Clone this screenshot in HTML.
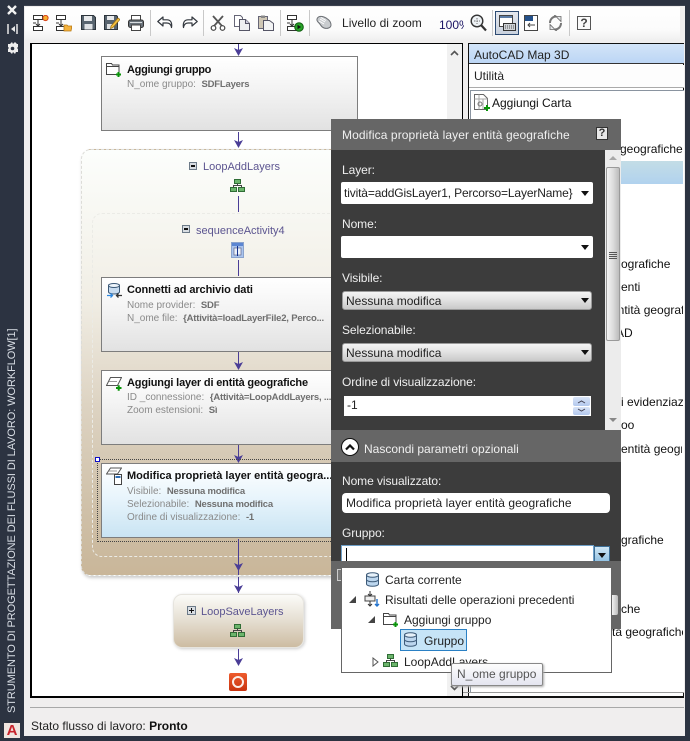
<!DOCTYPE html>
<html lang="it">
<head>
<meta charset="utf-8">
<title>Strumento di progettazione dei flussi di lavoro</title>
<style>
html,body{margin:0;padding:0}
body{width:690px;height:741px;overflow:hidden;position:relative;background:#2c3341;font-family:"Liberation Sans",sans-serif;font-size:12px;color:#111}
div,span,svg{position:absolute;box-sizing:border-box}
.t{white-space:nowrap;line-height:14px}
.card{left:101px;width:300px;height:75px;border:1px solid #7d7d7d;background:linear-gradient(#fff,#f3f3f3 45%,#e2e2e2)}
.ct{font-weight:bold;font-size:11px;color:#111;left:127px;white-space:nowrap;line-height:14px}
.cd{font-size:10px;color:#8a8a8a;left:127px;white-space:nowrap;line-height:13px}
.cd b{color:#6f6f6f;font-size:9.500px;letter-spacing:-.2px}
.ln{width:1px;background:#4a3d96;left:238px}
.lab{left:342px;color:#efefef;font-size:12px;white-space:nowrap;line-height:14px;letter-spacing:-.08px}
.box{left:341px;width:252px;height:22px;background:#fff;border-radius:2px}
.cmb{left:342px;width:250px;height:19px;border-radius:3px;background:linear-gradient(#f4f4f4,#e3e3e3 45%,#c9c9c9);border:1px solid #9a9a9a;font-size:12px;line-height:19px;padding-left:3px;color:#222}
.li{font-size:12px;color:#111;white-space:nowrap;line-height:14px}
.tree{font-size:12px;color:#222;white-space:nowrap;line-height:14px}
.sep{width:1px;height:26px;top:10px;background:#c9c9c9}
</style>
</head>
<body>
<svg width="0" height="0" style="left:0;top:0">
<defs>
<symbol id="db" viewBox="0 0 15 15"><path d="M1.500 3v9c0 1.300 2.600 2.300 6 2.300s6-1 6-2.300V3z" fill="#bcd6ee" stroke="#3d5a78"/><ellipse cx="7.500" cy="3" rx="6" ry="2.300" fill="#e6f1fa" stroke="#3d5a78"/><path d="M1.500 7.500c0 1.300 2.600 2.300 6 2.300s6-1 6-2.300" fill="none" stroke="#3d5a78"/></symbol>
<symbol id="net" viewBox="0 0 15 13"><rect x="4.500" y=".5" width="6" height="4" fill="#6cb56c" stroke="#2f6d35"/><rect x=".5" y="8.500" width="6" height="4" fill="#6cb56c" stroke="#2f6d35"/><rect x="8.500" y="8.500" width="6" height="4" fill="#6cb56c" stroke="#2f6d35"/><path d="M7.500 4.500v2M3.500 8.500v-2h8v2" fill="none" stroke="#444"/></symbol>
<symbol id="flow" viewBox="0 0 16 17"><rect x=".5" y=".5" width="9" height="4" fill="#fff" stroke="#333"/><rect x=".5" y="11.500" width="9" height="4" fill="#fff" stroke="#333"/><path d="M5 4.500v7M3 9l2 2 2-2M0 8h3" fill="none" stroke="#333"/></symbol>
<symbol id="addfolder" viewBox="0 0 15 15"><path d="M.5 12.500V1.500h5l1 1.500h6.500v9.500z" fill="#fff" stroke="#444"/><path d="M.5 4.500h12.500" stroke="#444"/><path d="M10 12.500h5M12.500 10v5" stroke="#0a930a" stroke-width="2"/></symbol>
</defs>
</svg>

<!-- sidebar -->
<svg style="left:5px;top:4px" width="15" height="52" viewBox="0 0 15 52">
<path d="M3 2l8 8M11 2l-8 8" stroke="#f2f2f2" stroke-width="2.400"/>
<path d="M3 20v10M12 20v10" stroke="#e8e8e8" stroke-width="1.500"/><path d="M6 25l4-3v6z" fill="#e8e8e8"/>
<path d="M3 40h2l2-2 1 2 2-2 2 2h1v3l-1 1 1 1v3h-2l-1 2-2-2-1 2-2-2H3v-3l1-1-1-1z" fill="#eee"/><circle cx="7.500" cy="44.500" r="1.800" fill="#2c3341"/>
</svg>
<div class="t" style="left:5px;bottom:28px;width:14px;height:384px;writing-mode:vertical-rl;transform:rotate(180deg);font-size:11px;color:#d8dde4;line-height:14px;letter-spacing:-.08px">STRUMENTO DI PROGETTAZIONE DEI FLUSSI DI LAVORO: WORKFLOW[1]</div>
<div style="left:4px;top:723px;width:16px;height:15px;background:#f0e5e0"></div>
<div class="t" style="left:4px;top:723px;width:16px;text-align:center;font-size:15px;font-weight:bold;color:#c8232c;line-height:15px">A</div>

<!-- window -->
<div style="left:24px;top:5px;width:661px;height:731px;background:#f0eeee;border-top:1px solid #3c4350"></div>

<!-- toolbar -->
<div style="left:25px;top:7px;width:655px;height:33px;background:linear-gradient(#fff,#fbfbfb 70%,#f0f0f0)"></div>
<svg style="left:33px;top:15px" width="16" height="17"><use href="#flow" width="16" height="17"/><circle cx="12.500" cy="3" r="2.600" fill="#f7b12d" stroke="#d8431b"/></svg>
<svg style="left:56px;top:15px" width="16" height="17"><use href="#flow" width="16" height="17"/><path d="M8 10h3l1 1h4l-1 5H8z" fill="#f4b23c" stroke="#b87a14" stroke-width=".8"/></svg>
<svg style="left:81px;top:15px" width="15" height="15" viewBox="0 0 15 15"><path d="M.5.500h12l2 2v12H.5z" fill="#58646f" stroke="#2c343b"/><rect x="3" y="1" width="8" height="5" fill="#e8eaec"/><rect x="3.500" y="9" width="8" height="5.500" fill="#dfe2e5"/></svg>
<svg style="left:104px;top:15px" width="16" height="15" viewBox="0 0 16 15"><path d="M.5.500h12l1 1v13H.5z" fill="#58646f" stroke="#2c343b"/><rect x="3" y="1" width="7" height="4" fill="#e8eaec"/><rect x="3" y="9" width="7" height="5" fill="#dfe2e5"/><path d="M7 11l7-8 2 1.500-7 8-2.500 1z" fill="#f3c140" stroke="#9c6d12" stroke-width=".7"/></svg>
<svg style="left:128px;top:15px" width="16" height="16" viewBox="0 0 16 16"><rect x="3.500" y=".5" width="9" height="5" fill="#fff" stroke="#444"/><rect x=".5" y="5" width="15" height="7.500" rx="2" fill="#6b747c" stroke="#333"/><rect x="3.500" y="10" width="9" height="5.500" fill="#fff" stroke="#444"/><path d="M2 7.500h12" stroke="#d9dde0"/></svg>
<div class="sep" style="left:150px"></div>
<svg style="left:157px;top:16px" width="16" height="13" viewBox="0 0 16 13"><path d="M6 1L.8 5.500 6 10V7h4c2.500 0 4 1.200 4.500 4.500C15.500 6 13 3.800 10 3.800H6z" fill="#fff" stroke="#33383f" stroke-width="1.200" stroke-linejoin="round"/></svg>
<svg style="left:182px;top:16px" width="16" height="13" viewBox="0 0 16 13"><path d="M10 1l5.200 4.500L10 10V7H6c-2.500 0-4 1.200-4.500 4.500C.5 6 3 3.800 6 3.800h4z" fill="#fff" stroke="#33383f" stroke-width="1.200" stroke-linejoin="round"/></svg>
<div class="sep" style="left:203px"></div>
<svg style="left:210px;top:15px" width="16" height="16" viewBox="0 0 16 16"><path d="M3 1l9 10M13 1L4 11" stroke="#555" stroke-width="1.800"/><circle cx="3.500" cy="13" r="2.300" fill="#fff" stroke="#444" stroke-width="1.200"/><circle cx="12.500" cy="13" r="2.300" fill="#fff" stroke="#444" stroke-width="1.200"/></svg>
<svg style="left:234px;top:15px" width="16" height="16" viewBox="0 0 16 16"><path d="M.5.500h6l2 2v9H.5z" fill="#fff" stroke="#667"/><path d="M5.500 4.500h6l4 4v7h-10z" fill="#eef0f2" stroke="#556"/><path d="M11.500 4.500v4h4" fill="#ccd" stroke="#556"/></svg>
<svg style="left:258px;top:15px" width="16" height="16" viewBox="0 0 16 16"><rect x=".5" y="1.500" width="9" height="12" fill="#cfc7b5" stroke="#667"/><rect x="3" y=".5" width="4" height="2.500" fill="#888"/><path d="M5.500 5.500h6l4 3v7h-10z" fill="#f3f4f5" stroke="#556"/></svg>
<div class="sep" style="left:280px"></div>
<svg style="left:287px;top:15px" width="17" height="17"><use href="#flow" width="16" height="17"/><circle cx="12" cy="12" r="4.300" fill="#27a327" stroke="#0d5c0d"/><path d="M10.500 9.800l3.500 2.200-3.500 2.200z" fill="#111"/></svg>
<div class="sep" style="left:309px"></div>
<svg style="left:316px;top:15px" width="16" height="15" viewBox="0 0 16 15"><path d="M1 4c1-3 4-3 7-2 3 1 7 4 7 8 0 3-4 4-7 3-3-1-3-3-5-5C2 7 .5 6 1 4z" fill="#c9cccf" stroke="#6c7075"/><path d="M4 4l5 3M5 2.500l5 3M3 6l5 3" stroke="#fff"/></svg>
<div class="t" style="left:342px;top:16px;font-size:12px;color:#222;letter-spacing:.03px">Livello di zoom</div>
<div class="t" style="left:439px;top:18px;width:25px;overflow:hidden;font-size:12px;color:#1b1464">100%</div>
<svg style="left:470px;top:14px" width="17" height="18" viewBox="0 0 17 18"><circle cx="7" cy="7" r="5.800" fill="#eef2f5" stroke="#333" stroke-width="1.400"/><path d="M4 7h6M7 4v6" stroke="#777" stroke-dasharray="1.500 1"/><path d="M11 11l5 5.500" stroke="#333" stroke-width="2.200"/></svg>
<div class="sep" style="left:492px"></div>
<div style="left:495px;top:11px;width:24px;height:24px;border:1px solid #2c4a72;background:linear-gradient(#e4e8ee,#c9d2de)"></div>
<svg style="left:499px;top:15px" width="17" height="16" viewBox="0 0 17 16"><rect x=".5" y=".5" width="13" height="11" fill="#fff" stroke="#444"/><rect x="1" y="1" width="12" height="2" fill="#5c7ca6"/><rect x="4.500" y="8.500" width="12" height="7" fill="#cfd3d7" stroke="#333"/><path d="M6 11h9M6 13h9" stroke="#555" stroke-dasharray="1 1"/></svg>
<svg style="left:524px;top:15px" width="14" height="16" viewBox="0 0 14 16"><rect x=".5" y=".5" width="13" height="15" fill="#fff" stroke="#444"/><rect x="1" y="1" width="8" height="5" fill="#23508a"/><path d="M11 10H4M6 8l-2 2 2 2" stroke="#444" fill="none"/></svg>
<svg style="left:548px;top:15px" width="15" height="16" viewBox="0 0 15 16"><path d="M2 8c0-4 3-6.500 6-6.500L6 .5M13 8c0 4-3 6.500-6 6.500l2 1" fill="none" stroke="#777" stroke-width="2"/><path d="M8 1.500h5v5zM7 14.500H2v-5z" fill="#e5e7ea" stroke="#666" stroke-width=".8"/></svg>
<div class="sep" style="left:569px"></div>
<div style="left:577px;top:16px;width:14px;height:14px;border:1px solid #555;background:#fafafa"></div>
<div class="t" style="left:577px;top:16px;width:14px;text-align:center;font-weight:bold;font-size:12px;color:#444">?</div>

<!-- canvas -->
<div style="left:30px;top:43px;width:433px;height:655px;border:1px solid #000;border-width:1px 1px 2px 2px;background:#fff;overflow:hidden"></div>
<div style="left:447px;top:44px;width:15px;height:652px;background:#f1f1f1"></div>
<svg style="left:450px;top:50px" width="9" height="6"><path d="M1 5l3.500-3.500L8 5" fill="none" stroke="#555" stroke-width="1.600"/></svg>
<svg style="left:450px;top:685px" width="9" height="6"><path d="M1 1l3.500 3.500L8 1" fill="none" stroke="#555" stroke-width="1.600"/></svg>

<!-- flow arrows -->
<div class="ln" style="top:44px;height:10px"></div><svg style="left:234px;top:47px" width="9" height="9"><path d="M0 1l4.500 2L9 1 4.500 9z" fill="#4a3d96"/></svg>
<div class="ln" style="top:132px;height:15px"></div><svg style="left:234px;top:139px" width="9" height="9"><path d="M0 1l4.500 2L9 1 4.500 9z" fill="#4a3d96"/></svg>

<!-- card 1 -->
<div class="card" style="top:56px;width:257px"></div>
<svg style="left:106px;top:62px" width="15" height="15"><use href="#addfolder" width="15" height="15"/></svg>
<div class="ct" style="top:63px;letter-spacing:-.3px">Aggiungi gruppo</div>
<div class="cd" style="top:78px">N_ome gruppo:&nbsp; <b>SDFLayers</b></div>

<!-- loop outer -->
<div style="left:81px;top:149px;width:300px;height:427px;border:1px dashed #dcdcd8;border-radius:10px;background:linear-gradient(#fcfefc,#f1eee5 35%,#ddd3c2 60%,#cfc0a8 85%,#c9b699);box-shadow:1px 2px 3px #ccc"></div>
<div style="left:189px;top:162px;width:8px;height:8px;background:#d8dde2;border:1px solid #6c7a88"></div><div style="left:191px;top:165px;width:4px;height:2px;background:#111"></div>
<div class="t" style="left:203px;top:160px;font-size:11px;color:#5c5590">LoopAddLayers</div>
<svg style="left:230px;top:179px" width="15" height="13"><use href="#net" width="15" height="13"/></svg>
<div class="ln" style="top:196px;height:16px"></div>

<!-- inner sequence -->
<div style="left:92px;top:213px;width:290px;height:344px;border:1px dashed #ebebe6;border-radius:10px"></div>
<div style="left:182px;top:225px;width:8px;height:8px;background:#d8dde2;border:1px solid #6c7a88"></div><div style="left:184px;top:228px;width:4px;height:2px;background:#111"></div>
<div class="t" style="left:196px;top:224px;font-size:11px;color:#5c5590">sequenceActivity4</div>
<svg style="left:231px;top:242px" width="13" height="16" viewBox="0 0 13 16"><rect x=".5" y=".5" width="12" height="15" fill="#a9c4ee" stroke="#8ba3cc"/><rect x="1" y="1" width="11" height="3" fill="#5c86d2"/><rect x="3" y="6" width="7" height="7" fill="#e9f0fb" stroke="#557" stroke-width=".6"/><path d="M6.500 4v10" stroke="#12308f"/></svg>
<div class="ln" style="top:260px;height:16px"></div>

<!-- card connetti -->
<div class="card" style="top:277px"></div>
<svg style="left:107px;top:283px" width="15" height="15" viewBox="0 0 15 15"><path d="M1.500 2v7c0 1 2.500 2 5.500 2s5.500-1 5.500-2V2z" fill="#c8dcf0" stroke="#3d5a78"/><ellipse cx="7" cy="2.500" rx="5.500" ry="2" fill="#eef5fb" stroke="#3d5a78"/><path d="M0 12.500h5M3.500 10.500l2 2-2 2" stroke="#2d88e0" fill="none" stroke-width="1.300"/><path d="M15 12.500h-5M11.500 10.500l-2 2 2 2" stroke="#333" fill="none" stroke-width="1.300"/></svg>
<div class="ct" style="top:283px;letter-spacing:-.1px">Connetti ad archivio dati</div>
<div class="cd" style="top:299px">Nome provider:&nbsp; <b>SDF</b></div>
<div class="cd" style="top:312px">N_ome file:&nbsp; <b>{Attività=loadLayerFile2, Perco...</b></div>
<div class="ln" style="top:352px;height:17px"></div><svg style="left:234px;top:361px" width="9" height="9"><path d="M0 1l4.500 2L9 1 4.500 9z" fill="#4a3d96"/></svg>

<!-- card aggiungi layer -->
<div class="card" style="top:370px"></div>
<svg style="left:106px;top:376px" width="16" height="15" viewBox="0 0 16 15"><path d="M4.500 1.500h11l-4 8H.5z" fill="#fff" stroke="#555"/><path d="M3 5.500h8" stroke="#999"/><path d="M10 12h5.500M12.700 9.300v5.500" stroke="#0a930a" stroke-width="2"/></svg>
<div class="ct" style="top:376px;letter-spacing:-.17px">Aggiungi layer di entità geografiche</div>
<div class="cd" style="top:391px">ID _connessione:&nbsp; <b>{Attività=LoopAddLayers, ...</b></div>
<div class="cd" style="top:404px">Zoom estensioni:&nbsp; <b>Sì</b></div>
<div class="ln" style="top:445px;height:17px"></div><svg style="left:234px;top:454px" width="9" height="9"><path d="M0 1l4.500 2L9 1 4.500 9z" fill="#4a3d96"/></svg>

<!-- selected -->
<div style="left:97px;top:459px;width:290px;height:83px;border:1px dotted #444"></div>
<div style="left:95px;top:457px;width:5px;height:5px;background:#fff;border:1px solid #1010c8"></div>
<div class="card" style="top:463px;background:linear-gradient(#fff,#e9f5fc 45%,#c9e4f3)"></div>
<svg style="left:106px;top:467px" width="16" height="18" viewBox="0 0 16 18"><path d="M4.500 1h11l-4 6H.5z" fill="#fff" stroke="#555"/><path d="M3 4h8" stroke="#999"/><rect x="8.500" y="7.500" width="7" height="10" fill="#fff" stroke="#444"/><rect x="9.500" y="9" width="5" height="2" fill="#2e6db5"/></svg>
<div class="ct" style="top:469px">Modifica proprietà layer entità geogra...</div>
<div class="cd" style="top:485px">Visibile:&nbsp; <b>Nessuna modifica</b></div>
<div class="cd" style="top:498px">Selezionabile:&nbsp; <b>Nessuna modifica</b></div>
<div class="cd" style="top:511px">Ordine di visualizzazione:&nbsp; <b>-1</b></div>
<div class="ln" style="top:539px;height:36px"></div><svg style="left:234px;top:562px" width="9" height="9"><path d="M0 1l4.500 2L9 1 4.500 9z" fill="#4a3d96"/></svg>

<div class="ln" style="top:577px;height:16px"></div><svg style="left:234px;top:584px" width="9" height="9"><path d="M0 1l4.500 2L9 1 4.500 9z" fill="#4a3d96"/></svg>

<!-- save layers -->
<div style="left:173px;top:594px;width:131px;height:54px;border:1px solid #e6e4de;border-radius:9px;background:linear-gradient(#fbfbf8,#e7e1d5 45%,#cdbca2);box-shadow:1px 1px 3px #ccc"></div>
<div style="left:187px;top:606px;width:9px;height:9px;background:#d8dde2;border:1px solid #6c7a88"></div><div style="left:189px;top:610px;width:5px;height:1px;background:#111"></div><div style="left:191px;top:608px;width:1px;height:5px;background:#111"></div>
<div class="t" style="left:201px;top:605px;font-size:11px;color:#5c5590">LoopSaveLayers</div>
<svg style="left:230px;top:624px" width="15" height="13"><use href="#net" width="15" height="13"/></svg>
<div class="ln" style="top:649px;height:15px"></div><svg style="left:234px;top:657px" width="9" height="9"><path d="M0 1l4.500 2L9 1 4.500 9z" fill="#4a3d96"/></svg>
<div style="left:229px;top:673px;width:18px;height:18px;border-radius:2px;background:linear-gradient(#ee5b2d,#c8330f)"></div>
<div style="left:232px;top:676px;width:12px;height:12px;border-radius:6px;border:2px solid #fbeee8"></div>

<!-- right panel -->
<div style="left:468px;top:43px;width:216px;height:654px;background:#fff;border:1px solid #111;border-bottom:1px solid #000"></div>
<div style="left:469px;top:44px;width:215px;height:20px;background:linear-gradient(#d3e4f8,#bcd6f5);border-bottom:1px solid #333"></div>
<div class="t" style="left:474px;top:48px;font-size:12px;color:#222">AutoCAD Map 3D</div>
<div style="left:469px;top:65px;width:215px;height:23px;background:#fdfdfd;border-bottom:1px solid #aaa"></div>
<div class="t" style="left:474px;top:69px;font-size:12px;color:#222">Utilità</div>
<div style="left:470px;top:90px;width:214px;height:603px;background:#fff;border:1px solid #8a94a0;border-right:none"></div>
<svg style="left:474px;top:94px" width="16" height="17" viewBox="0 0 16 17"><path d="M.5.500h9l4 4v11H.5z" fill="#fff" stroke="#666"/><path d="M.5 5h13M5 .5v15M9 5v10" stroke="#aaa"/><circle cx="6" cy="10" r="2" fill="none" stroke="#777"/><path d="M10 14h6M13 11v6" stroke="#0a930a" stroke-width="2"/></svg>
<div class="li" style="left:492px;top:96px">Aggiungi Carta</div>
<div class="li" style="left:620px;top:142px">geografiche</div>
<div style="left:605px;top:161px;width:78px;height:23px;background:linear-gradient(#c3dde6,#b1d2ee)"></div>
<div class="li" style="left:621px;top:257px">ografiche</div>
<div class="li" style="left:621px;top:280px">enti</div>
<div class="li" style="left:611px;top:303px;width:72px;overflow:hidden">entità geografiche</div>
<div class="li" style="left:616px;top:326px">AD</div>
<div class="li" style="left:621px;top:395px;width:62px;overflow:hidden">i evidenziazioni</div>
<div class="li" style="left:621px;top:418px">oo</div>
<div class="li" style="left:621px;top:442px;width:61px;overflow:hidden">entità geografiche</div>
<div class="li" style="left:621px;top:533px">grafiche</div>
<div class="li" style="left:621px;top:602px">che</div>
<div class="li" style="left:612px;top:625px;width:71px;overflow:hidden">ta geografiche</div>

<!-- status -->
<div style="left:30px;top:707px;width:654px;height:1px;background:#a8a8a8"></div>
<div style="left:463px;top:692px;width:221px;height:1px;background:#999"></div>
<div style="left:463px;top:696px;width:221px;height:2px;background:#111"></div>
<div class="t" style="left:31px;top:719px;font-size:12px;color:#222">Stato flusso di lavoro: <b style="color:#111">Pronto</b></div>

<!-- dialog -->
<div style="left:331px;top:119px;width:290px;height:31px;background:#666"></div>
<div class="t" style="left:342px;top:128px;font-size:12px;color:#f0f0f0;letter-spacing:.1px">Modifica proprietà layer entità geografiche</div>
<div style="left:596px;top:127px;width:12px;height:13px;background:#e8e8e8;border:1px solid #333"></div>
<div class="t" style="left:596px;top:127px;width:12px;text-align:center;font-weight:bold;font-size:11px;line-height:13px;color:#333">?</div>
<div style="left:331px;top:150px;width:274px;height:280px;background:#3c3c3c"></div>
<div style="left:605px;top:150px;width:16px;height:280px;background:#ececec"></div>
<svg style="left:609px;top:156px" width="8" height="5"><path d="M0 4l4-4 4 4z" fill="#a8a8a8"/></svg>
<svg style="left:609px;top:418px" width="8" height="5"><path d="M0 0l4 4 4-4z" fill="#888"/></svg>
<div style="left:606px;top:167px;width:14px;height:174px;border:1px solid #9a9a9a;border-radius:2px;background:linear-gradient(90deg,#f4f4f4,#d9d9d9 55%,#bcbcbc)"></div>
<div style="left:609px;top:252px;width:8px;height:7px;background:repeating-linear-gradient(#555 0,#555 1px,transparent 1px,transparent 2px)"></div>

<div class="lab" style="top:163px">Layer:</div>
<div class="box" style="top:182px"></div>
<div class="t" style="left:344px;top:186px;width:232px;overflow:hidden;font-size:12px;color:#222;letter-spacing:-.14px">tività=addGisLayer1, Percorso=LayerName}</div>
<svg style="left:581px;top:191px" width="8" height="5"><path d="M0 0h8L4 5z" fill="#111"/></svg>

<div class="lab" style="top:217px">Nome:</div>
<div class="box" style="top:236px"></div>
<svg style="left:581px;top:245px" width="8" height="5"><path d="M0 0h8L4 5z" fill="#111"/></svg>

<div class="lab" style="top:271px">Visibile:</div>
<div class="cmb" style="top:291px">Nessuna modifica</div>
<svg style="left:581px;top:298px" width="8" height="5"><path d="M0 0h8L4 5z" fill="#111"/></svg>

<div class="lab" style="top:323px">Selezionabile:</div>
<div class="cmb" style="top:343px">Nessuna modifica</div>
<svg style="left:581px;top:350px" width="8" height="5"><path d="M0 0h8L4 5z" fill="#111"/></svg>

<div class="lab" style="top:375px">Ordine di visualizzazione:</div>
<div style="left:344px;top:396px;width:247px;height:20px;background:#fff"></div>
<div class="t" style="left:347px;top:398px;font-size:12px;color:#222">-1</div>
<div style="left:573px;top:397px;width:17px;height:9px;border-radius:2px;background:linear-gradient(#d9e4f7,#b3c8ee)"></div>
<div style="left:573px;top:407px;width:17px;height:8px;border-radius:2px;background:linear-gradient(#d9e4f7,#b3c8ee)"></div>
<svg style="left:576px;top:399px" width="11" height="14"><path d="M2 4l3.500-2L9 4M2 10l3.500 2L9 10" fill="none" stroke="#445" stroke-width="1"/></svg>

<div style="left:331px;top:430px;width:290px;height:32px;background:#666"></div>
<div style="left:341px;top:438px;width:18px;height:18px;border-radius:9px;background:#fff;border:1px solid #111"></div>
<svg style="left:345px;top:444px" width="10" height="7"><path d="M1 5.500l4-4 4 4" fill="none" stroke="#111" stroke-width="2.200"/></svg>
<div class="t" style="left:364px;top:442px;font-size:12px;color:#f0f0f0">Nascondi parametri opzionali</div>
<div style="left:331px;top:462px;width:290px;height:99px;background:#3c3c3c"></div>

<div class="lab" style="top:474px">Nome visualizzato:</div>
<div style="left:342px;top:493px;width:268px;height:20px;background:#fff;border-radius:4px"></div>
<div class="t" style="left:346px;top:496px;font-size:12px;color:#222;letter-spacing:.05px">Modifica proprietà layer entità geografiche</div>

<div class="lab" style="top:526px">Gruppo:</div>
<div style="left:341px;top:545px;width:253px;height:17px;background:#fff;border:1px solid #6fa0c8;border-bottom:none"></div>
<div style="left:346px;top:548px;width:1px;height:13px;background:#000"></div>
<div style="left:594px;top:546px;width:16px;height:16px;background:linear-gradient(#cfe6f5,#8fc0e2);border:1px solid #3c6e96;border-bottom:none"></div>
<svg style="left:598px;top:553px" width="8" height="5"><path d="M0 0h8L4 5z" fill="#111"/></svg>

<div style="left:331px;top:561px;width:290px;height:68px;background:#666"></div>
<div style="left:337px;top:569px;width:6px;height:12px;border:1px solid #ccc;background:#777"></div>
<div style="left:612px;top:595px;width:6px;height:20px;background:linear-gradient(90deg,#f2f2f2,#bbb);border-radius:0 2px 2px 0"></div>

<!-- popup tree -->
<div style="left:341px;top:568px;width:271px;height:105px;background:#fff;border:1px solid #666;border-top:none"></div>
<svg style="left:365px;top:572px" width="15" height="15"><use href="#db" width="15" height="15"/></svg>
<div class="tree" style="left:385px;top:573px">Carta corrente</div>
<svg style="left:349px;top:596px" width="8" height="8"><path d="M7 0v7H0z" fill="#444"/></svg>
<svg style="left:364px;top:591px" width="16" height="16" viewBox="0 0 16 16"><rect x="1" y="5" width="10" height="5" fill="#eee" stroke="#444"/><path d="M6 0v5M4 3l2 2 2-2M6 10v5M4 13l2 2 2-2" fill="none" stroke="#333"/><path d="M13 8v7M11 13l2 2 2-2" fill="none" stroke="#2272cc" stroke-width="1.400"/></svg>
<div class="tree" style="left:385px;top:593px">Risultati delle operazioni precedenti</div>
<svg style="left:368px;top:616px" width="8" height="8"><path d="M7 0v7H0z" fill="#444"/></svg>
<svg style="left:383px;top:612px" width="15" height="15"><use href="#addfolder" width="15" height="15"/></svg>
<div class="tree" style="left:404px;top:613px">Aggiungi gruppo</div>
<div style="left:400px;top:629px;width:67px;height:22px;background:#c6e4f7;border:1px solid #2a80c4"></div>
<svg style="left:403px;top:632px" width="15" height="15"><use href="#db" width="15" height="15"/></svg>
<div class="tree" style="left:424px;top:634px">Gruppo</div>
<svg style="left:372px;top:657px" width="7" height="10"><path d="M1 1l5 4-5 4z" fill="#fff" stroke="#555"/></svg>
<svg style="left:383px;top:654px" width="15" height="13"><use href="#net" width="15" height="13"/></svg>
<div class="tree" style="left:404px;top:655px">LoopAddLayers</div>

<!-- tooltip -->
<div style="left:451px;top:663px;width:92px;height:23px;border:1px solid #888;border-radius:2px;background:linear-gradient(#fdfdfd,#e4e5f0);box-shadow:1px 1px 2px #aaa"></div>
<div class="t" style="left:457px;top:667px;font-size:12px;color:#555">N_ome gruppo</div>
</body>
</html>
